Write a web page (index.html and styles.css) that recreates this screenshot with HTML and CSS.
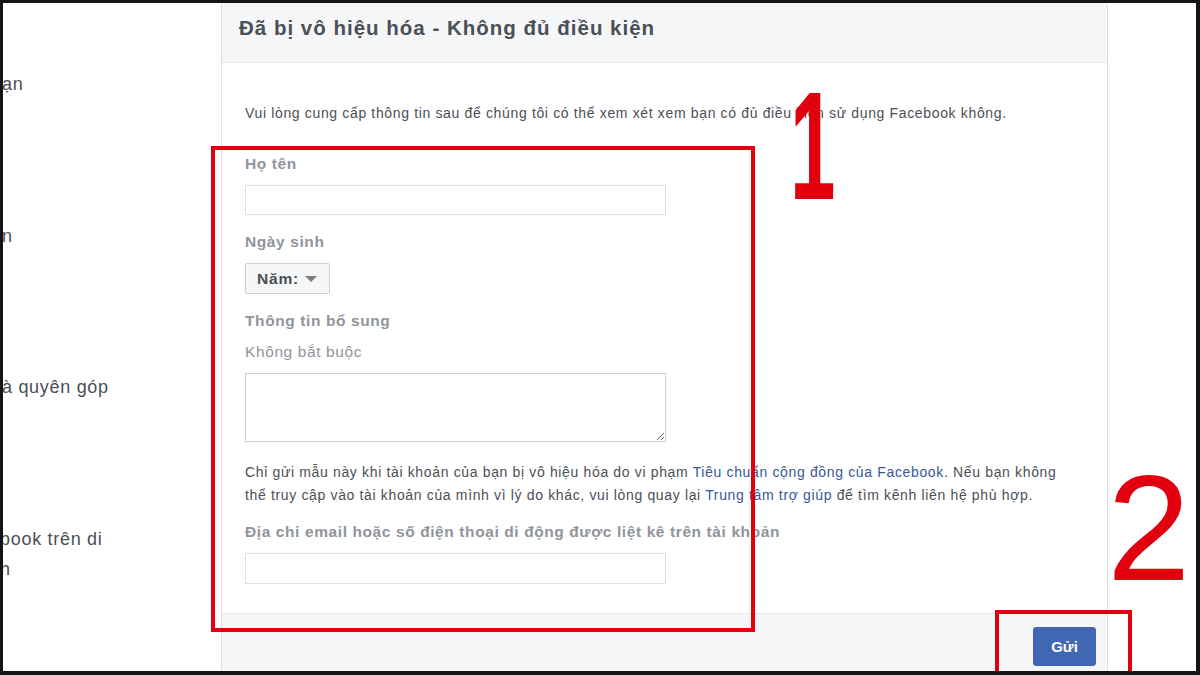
FILE: index.html
```html
<!DOCTYPE html>
<html lang="vi">
<head>
<meta charset="utf-8">
<title>Đã bị vô hiệu hóa - Không đủ điều kiện</title>
<link rel="stylesheet" href="styles.css">
</head>
<body>
<div class="frame">
  <aside class="side">
    <div class="side-item s1">ạn</div>
    <div class="side-item s2">n</div>
    <div class="side-item s3">à quyên góp</div>
    <div class="side-item s4">book trên di<br>h</div>
  </aside>
  <main class="dialog">
    <header class="dlg-head">
      <h1 class="dlg-title">Đã bị vô hiệu hóa - Không đủ điều kiện</h1>
    </header>
    <section class="dlg-body">
      <p class="intro">Vui lòng cung cấp thông tin sau để chúng tôi có thể xem xét xem bạn có đủ điều kiện sử dụng Facebook không.</p>
      <label class="lbl l-name">Họ tên</label>
      <input class="field" type="text">
      <label class="lbl l-dob">Ngày sinh</label>
      <button class="select" type="button">Năm: <span class="caret"></span></button>
      <label class="lbl l-extra">Thông tin bổ sung</label>
      <div class="hint">Không bắt buộc</div>
      <textarea class="area"></textarea>
      <p class="note">Chỉ gửi mẫu này khi tài khoản của bạn bị vô hiệu hóa do vi phạm <a href="#">Tiêu chuẩn cộng đồng của Facebook</a>. Nếu bạn không<br>thể truy cập vào tài khoản của mình vì lý do khác, vui lòng quay lại <a href="#">Trung tâm trợ giúp</a> để tìm kênh liên hệ phù hợp.</p>
      <label class="lbl l-email">Địa chỉ email hoặc số điện thoại di động được liệt kê trên tài khoản</label>
      <input class="field field-last" type="text">
    </section>
    <footer class="dlg-foot">
      <button class="send" type="button">Gửi</button>
    </footer>
  </main>
  <div class="rest"></div>

  <div class="mark box1"></div>
  <div class="mark box2"></div>
  <div class="num num1">1</div>
  <div class="num num2">2</div>
</div>
</body>
</html>
```

FILE: styles.css
```css
html, body {
  margin: 0;
  padding: 0;
  background: #fff;
  overflow: hidden;
}

.frame {
  position: relative;
  box-sizing: border-box;
  width: 1200px;
  height: 675px;
  border: 3px solid #141414;
  border-right-width: 4px;
  border-bottom-width: 4px;
  display: flex;
  overflow: hidden;
  font-family: "Liberation Sans", Arial, sans-serif;
  color: #4b4f56;
}

/* left clipped sidebar */
.side {
  width: 218px;
  flex: none;
  background: #fff;
  display: flex;
  flex-direction: column;
  font-size: 18px;
  line-height: 30px;
  letter-spacing: 0.7px;
  color: #4b4f56;
}
.side-item { white-space: nowrap; margin-left: -1px; }
.s1 { margin-top: 66px; }
.s2 { margin-top: 122px; }
.s3 { margin-top: 121px; }
.s4 { margin-top: 122px; margin-left: -3px; }

/* dialog */
.dialog {
  width: 885px;
  flex: none;
  display: flex;
  flex-direction: column;
  border-left: 1px solid #dddfe2;
  border-right: 1px solid #dddfe2;
  background: #fff;
}

.dlg-head {
  height: 60px;
  flex: none;
  box-sizing: border-box;
  background: #f5f6f7;
  border-bottom: 1px solid #e5e6e9;
  padding: 13px 0 0 17px;
}
.dlg-title {
  margin: 0;
  font-size: 20.5px;
  line-height: 24px;
  letter-spacing: 1px;
  font-weight: bold;
  color: #4b4f56;
}

.dlg-body {
  flex: 1;
  display: flex;
  flex-direction: column;
  align-items: flex-start;
  padding: 41px 0 0 23px;
}

.intro {
  margin: 0;
  font-size: 14px;
  line-height: 18px;
  letter-spacing: 0.65px;
  color: #4b4f56;
}

.lbl {
  display: block;
  font-size: 15.5px;
  line-height: 18px;
  letter-spacing: 0.6px;
  font-weight: bold;
  color: #90949c;
}
.l-name { margin-top: 33px; }
.l-dob { margin-top: 18px; }
.l-extra { margin-top: 18px; }
.l-email { margin-top: 16px; }

.hint {
  margin-top: 13px;
  font-size: 15.5px;
  line-height: 18px;
  letter-spacing: 0.6px;
  color: #90949c;
}

.field {
  margin: 12px 0 0;
  box-sizing: border-box;
  width: 421px;
  height: 30px;
  border: 1px solid #dddfe2;
  border-radius: 0;
  background: #fff;
  padding: 0 6px;
}
.field-last { height: 31px; }

.select {
  margin-top: 12px;
  box-sizing: border-box;
  width: 85px;
  height: 31px;
  display: flex;
  align-items: center;
  gap: 6px;
  padding: 0 0 0 11px;
  background: #f5f6f7;
  border: 1px solid #ccd0d5;
  border-radius: 2px;
  font-family: "Liberation Sans", Arial, sans-serif;
  font-size: 15.5px;
  letter-spacing: 0.8px;
  font-weight: bold;
  color: #4b4f56;
}
.caret {
  width: 0;
  height: 0;
  border-left: 6px solid transparent;
  border-right: 6px solid transparent;
  border-top: 6px solid #7f7f7f;
}

.area {
  margin-top: 12px;
  box-sizing: border-box;
  width: 421px;
  height: 69px;
  border: 1px solid #ccd0d5;
  border-radius: 0;
  resize: both;
  font-family: inherit;
}

.note {
  margin: 19px 0 0;
  font-size: 14px;
  line-height: 23px;
  letter-spacing: 0.65px;
  color: #4b4f56;
}
.note a {
  color: #365899;
  text-decoration: none;
}

.dlg-foot {
  height: 58px;
  flex: none;
  box-sizing: border-box;
  background: #f5f6f7;
  border-top: 1px solid #e5e6e9;
  display: flex;
  justify-content: flex-end;
  align-items: flex-start;
  padding: 13px 11px 0 0;
}
.send {
  width: 63px;
  height: 39px;
  background: #4267b2;
  border: 1px solid #4267b2;
  border-radius: 3px;
  color: #fff;
  font-family: "Liberation Sans", Arial, sans-serif;
  font-size: 15px;
  font-weight: bold;
}

.rest {
  flex: 1;
  background: #fff;
}

/* red annotations */
.mark {
  position: absolute;
  box-sizing: border-box;
  border: 4px solid #e2000f;
}
.box1 { left: 208px; top: 143px; width: 544px; height: 486px; }
.box2 { left: 992px; top: 607px; width: 137px; height: 70px; }

.num {
  position: absolute;
  color: #e2000f;
  font-family: "Liberation Sans", Arial, sans-serif;
  line-height: 1;
}
.num1 {
  left: 787px;
  top: 66px;
  font-size: 154px;
  font-weight: bold;
  transform: scaleX(0.53);
  transform-origin: left top;
}
.num2 { left: 1104px; top: 450px; font-size: 150px; font-weight: normal; }
```
